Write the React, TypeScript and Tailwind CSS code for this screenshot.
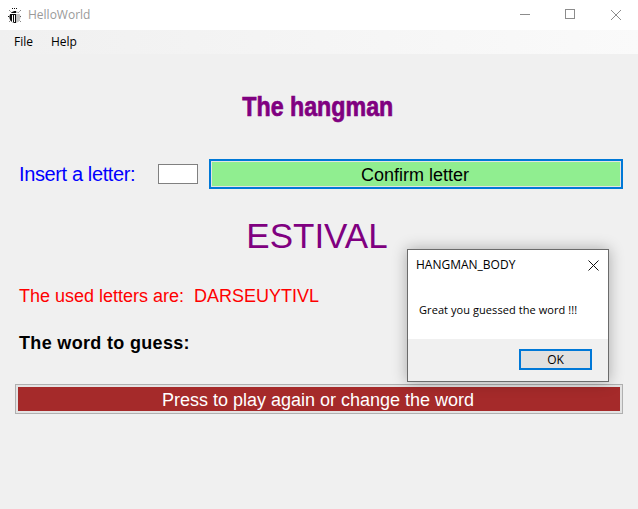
import React from 'react';

const Beetle = () => (
  <svg width="16" height="16" viewBox="0 0 16 16" className="shrink-0">
    <path d="M5 1.500h6M2.500 3.500l2 2M13.500 3.500l-2 2M1 9.500h2M13 9.500h2M2.500 14.500l2-2M13.500 14.500l-2-2" stroke="#111" strokeWidth="1" strokeDasharray="1 1" fill="none" />
    <ellipse cx="8" cy="10" rx="5.500" ry="6" fill="#c4c4c4" />
    <path d="M9 4C5 4 2.500 6.500 2.500 10S5 16 9 16z" fill="#0a0a0a" />
    <path d="M3 6.500h10" stroke="#fff" strokeWidth="1" />
    <path d="M5.500 8v7M7.500 8v7" stroke="#fff" strokeWidth="1" />
  </svg>
);

const WindowControls = () => (
  <div className="flex items-center h-full text-[#8c8c8c]">
    <div className="w-[44px] mb-[2px] flex justify-center">
      <svg width="10" height="10" viewBox="0 0 10 10"><path d="M0 5.500h10" stroke="currentColor" fill="none" /></svg>
    </div>
    <div className="w-[46px] mb-[2px] flex justify-center">
      <svg width="10" height="10" viewBox="0 0 10 10"><rect x="0.500" y="0.500" width="9" height="9" stroke="currentColor" fill="none" /></svg>
    </div>
    <div className="w-[45px] pl-[1px] mb-[1px] flex justify-center">
      <svg width="10" height="10" viewBox="0 0 10 10"><path d="M0 0l10 10M10 0L0 10" stroke="currentColor" fill="none" /></svg>
    </div>
  </div>
);

export default function App() {
  return (
    <div className="relative w-[638px] h-[509px] overflow-hidden bg-[#f0f0f0] font-['Liberation_Sans',sans-serif]">
      {/* Title bar */}
      <div className="h-[30px] bg-white flex items-center justify-between pl-[7px]">
        <div className="flex items-center gap-[5px]">
          <Beetle />
          <span className="text-[12px] text-[#9a9a9a] font-['Open_Sans',sans-serif]">HelloWorld</span>
        </div>
        <WindowControls />
      </div>

      {/* Menu */}
      <div className="h-[24px] flex items-center gap-[18px] pl-[14px] text-[12px] text-black bg-gradient-to-r from-[#f0f0f0] to-[#fafafa] font-['Open_Sans',sans-serif]">
        <span>File</span>
        <span>Help</span>
      </div>

      {/* Main */}
      <div className="flex flex-col">
        <div className="mt-[37px] h-[32px] flex justify-center pr-[3px]">
          <h1 className="scale-x-[0.86] whitespace-nowrap text-[27px] leading-[32px] font-bold text-[#800080] [-webkit-text-stroke:0.7px_#800080]">
            The hangman
          </h1>
        </div>

        <div className="mt-[36px] flex items-center pl-[19px] h-[30px]">
          <span className="w-[139px] text-[20px] tracking-[-0.38px] text-[#0000ff]">Insert a letter:</span>
          <input className="w-[40px] h-[20px] bg-white border border-[#808080] outline-none" />
          <button className="ml-[11px] w-[414px] h-[30px] bg-[#90ee90] border-2 border-[#0078d7] shadow-[inset_0_0_0_1px_#e3e3e3] text-[18px] pt-[1px] pr-[2px] text-black">
            Confirm letter
          </button>
        </div>

        <div className="mt-[27px] pr-[4px] text-center text-[35px] leading-[40px] text-[#800080]">ESTIVAL</div>

        <div className="mt-[28px] pl-[19px] text-[18px] leading-[24px] text-[#ff0000] whitespace-pre">
          The used letters are:  DARSEUYTIVL
        </div>

        <div className="mt-[23px] pl-[19px] text-[18px] tracking-[0.33px] leading-[24px] font-bold text-black">The word to guess:</div>

        <button className="mt-[29px] ml-[15px] w-[608px] h-[30px] bg-[#a52a2a] border border-[#b0b0b0] shadow-[inset_0_0_0_2px_#e3e3e3] pt-[2px] pr-[2px] text-[18px] text-white">
          Press to play again or change the word
        </button>
      </div>

      {/* Message box */}
      <div className="absolute left-[407px] top-[249px] w-[202px] h-[133px] bg-white border border-[#6b6b6b] shadow-[0_0_14px_rgba(0,0,0,0.3)] flex flex-col font-['Open_Sans',sans-serif]">
        <div className="h-[30px] flex items-center justify-between pl-[8px] pr-[9px] text-[12px] text-black">
          <span>HANGMAN_BODY</span>
          <svg width="11" height="11" viewBox="0 0 11 11"><path d="M0.500 0.500l10 10M10.500 0.500l-10 10" stroke="#111" fill="none" /></svg>
        </div>
        <div className="flex-1 pl-[11px] pt-[22px] text-[11px] tracking-[0.07px] text-black">Great you guessed the word !!!</div>
        <div className="h-[42px] bg-[#f0f0f0] flex items-start justify-end pt-[10px] pr-[16px]">
          <button className="w-[73px] h-[21px] bg-[#e1e1e1] border-2 border-[#0078d7] text-[12px] leading-none text-black">OK</button>
        </div>
      </div>
    </div>
  );
}
